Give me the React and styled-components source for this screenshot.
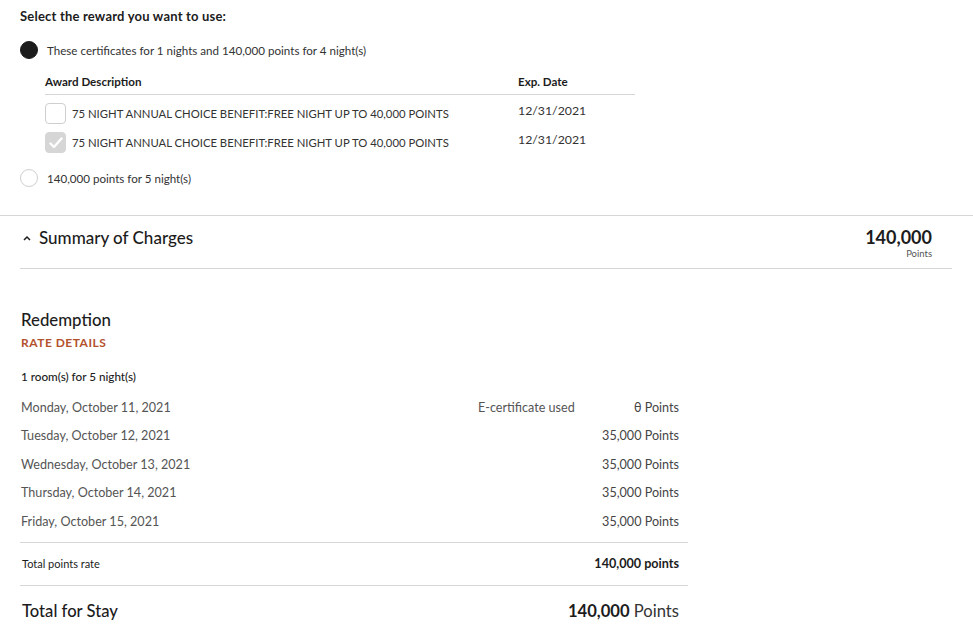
import React from 'react';
import styled, { createGlobalStyle } from 'styled-components';

const GlobalStyle = createGlobalStyle`
  body {
    margin: 0;
    background: #fff;
    font-family: Lato, 'Liberation Sans', sans-serif;
    color: #333;
  }
`;

const Page = styled.div`
  width: 973px;
`;

const RewardSection = styled.section`
  padding: 8px 20px 28px;
  border-bottom: 1px solid #d6d6d6;
`;

const Heading = styled.h3`
  margin: 0;
  font-size: 13px;
  line-height: 16px;
  font-weight: 700;
  letter-spacing: 0.2px;
  color: #1c1c1c;
`;

const RadioRow = styled.label`
  display: flex;
  align-items: center;
  gap: 9px;
  margin-top: ${(p) => p.$top}px;
  font-size: 11.6px;
  color: #333;
`;

const Radio = styled.span`
  width: 18px;
  height: 18px;
  border-radius: 50%;
  box-sizing: border-box;
  background: ${(p) => (p.$checked ? '#1c1c1c' : '#fff')};
  border: 1px solid ${(p) => (p.$checked ? '#1c1c1c' : '#cfcfcf')};
  flex-shrink: 0;
`;

const AwardTable = styled.div`
  margin: 16px 0 0 25px;
  width: 590px;
`;

const AwardHead = styled.div`
  display: grid;
  grid-template-columns: 473px 1fr;
  padding-bottom: 5px;
  border-bottom: 1px solid #d6d6d6;
  font-size: 11.6px;
  line-height: 14px;
  font-weight: 700;
  color: #1c1c1c;
`;

const AwardRow = styled.div`
  display: grid;
  grid-template-columns: 473px 1fr;
  align-items: start;
  margin-top: ${(p) => p.$top}px;
  font-size: 11.3px;
  color: #333;
`;

const AwardName = styled.div`
  display: flex;
  align-items: center;
  gap: 6px;
`;

const AwardDate = styled.div`
  font-size: 12.3px;
  line-height: 16px;
`;

const Checkbox = styled.span`
  width: 21px;
  height: 21px;
  box-sizing: border-box;
  border-radius: 4px;
  border: 1px solid ${(p) => (p.$checked ? '#d6d6d6' : '#cfcfcf')};
  background: ${(p) => (p.$checked ? '#d6d6d6' : '#fff')};
  display: flex;
  align-items: center;
  justify-content: center;
  flex-shrink: 0;
`;

const SummaryHeader = styled.div`
  display: flex;
  justify-content: space-between;
  align-items: flex-start;
  margin: 0 21px 0 20px;
  padding: 10px 20px 8px 3px;
  border-bottom: 1px solid #d6d6d6;
`;

const SummaryTitle = styled.div`
  display: flex;
  align-items: center;
  gap: 8px;
  margin-top: 1px;
  font-size: 17px;
  font-weight: 500;
  color: #1c1c1c;
`;

const SummaryTotal = styled.div`
  text-align: right;
`;

const BigPoints = styled.div`
  font-size: 18px;
  line-height: 22px;
  font-weight: 700;
  color: #1c1c1c;
`;

const SmallLabel = styled.div`
  font-size: 9.5px;
  line-height: 12px;
  color: #555;
  margin-top: 0;
`;

const Redemption = styled.section`
  width: 668px;
  margin: 41px 0 0 20px;
`;

const SectionTitle = styled.h2`
  margin: 0 0 0 1px;
  font-size: 16.8px;
  line-height: 20px;
  font-weight: 500;
  color: #1c1c1c;
`;

const RateLabel = styled.div`
  margin: 6px 0 0 1px;
  font-size: 12px;
  line-height: 14px;
  font-weight: 700;
  letter-spacing: 0.5px;
  color: #b3512d;
`;

const RoomCount = styled.div`
  margin: 19px 0 10px 1px;
  font-size: 11.7px;
  line-height: 14px;
  font-weight: 500;
  color: #1c1c1c;
`;

const NightRow = styled.div`
  display: grid;
  grid-template-columns: 457px 1fr auto;
  align-items: center;
  height: 28.5px;
  padding: 0 9px 0 1px;
  font-size: 12.6px;
  color: #555;
`;

const Note = styled.span`
  color: #555;
`;

const Amount = styled.span`
  text-align: right;
  color: #444;
`;

const TotalRow = styled.div`
  display: flex;
  justify-content: space-between;
  align-items: center;
  height: 42px;
  margin-top: 6px;
  padding: 0 9px 0 2px;
  border-top: 1px solid #d6d6d6;
  border-bottom: 1px solid #d6d6d6;
  font-size: 11px;
  color: #1c1c1c;
`;

const TotalValue = styled.span`
  font-size: 12.6px;
  font-weight: 700;
`;

const StayRow = styled.div`
  display: flex;
  justify-content: space-between;
  align-items: center;
  height: 50px;
  padding: 0 9px 0 2px;
  font-size: 16.6px;
  font-weight: 500;
  color: #1c1c1c;
`;

const StayValue = styled.span`
  font-weight: 400;
  color: #333;

  b {
    font-weight: 700;
    color: #1c1c1c;
  }
`;

const nights = [
  { date: 'Monday, October 11, 2021', note: 'E-certificate used', amount: 'θ Points' },
  { date: 'Tuesday, October 12, 2021', amount: '35,000 Points' },
  { date: 'Wednesday, October 13, 2021', amount: '35,000 Points' },
  { date: 'Thursday, October 14, 2021', amount: '35,000 Points' },
  { date: 'Friday, October 15, 2021', amount: '35,000 Points' },
];

const Check = () => (
  <svg width="14" height="12" viewBox="0 0 14 12">
    <path d="M1.5 6.5 L5 10 L12.5 1.5" fill="none" stroke="#fff" strokeWidth="2.4" strokeLinecap="round" strokeLinejoin="round" />
  </svg>
);

const Chevron = () => (
  <svg width="8" height="6" viewBox="0 0 8 6">
    <path d="M1 5 L4 2 L7 5" fill="none" stroke="#1c1c1c" strokeWidth="1.5" />
  </svg>
);

const App = () => (
  <Page>
    <GlobalStyle />
    <RewardSection>
      <Heading>Select the reward you want to use:</Heading>
      <RadioRow $top={17}>
        <Radio $checked />
        These certificates for 1 nights and 140,000 points for 4 night(s)
      </RadioRow>

      <AwardTable>
        <AwardHead>
          <span>Award Description</span>
          <span>Exp. Date</span>
        </AwardHead>
        <AwardRow $top={8}>
          <AwardName>
            <Checkbox />
            75 NIGHT ANNUAL CHOICE BENEFIT:FREE NIGHT UP TO 40,000 POINTS
          </AwardName>
          <AwardDate>12/31/2021</AwardDate>
        </AwardRow>
        <AwardRow $top={8}>
          <AwardName>
            <Checkbox $checked>
              <Check />
            </Checkbox>
            75 NIGHT ANNUAL CHOICE BENEFIT:FREE NIGHT UP TO 40,000 POINTS
          </AwardName>
          <AwardDate>12/31/2021</AwardDate>
        </AwardRow>
      </AwardTable>

      <RadioRow $top={16}>
        <Radio />
        140,000 points for 5 night(s)
      </RadioRow>
    </RewardSection>

    <SummaryHeader>
      <SummaryTitle>
        <Chevron />
        Summary of Charges
      </SummaryTitle>
      <SummaryTotal>
        <BigPoints>140,000</BigPoints>
        <SmallLabel>Points</SmallLabel>
      </SummaryTotal>
    </SummaryHeader>

    <Redemption>
      <SectionTitle>Redemption</SectionTitle>
      <RateLabel>RATE DETAILS</RateLabel>
      <RoomCount>1 room(s) for 5 night(s)</RoomCount>
      {nights.map((n) => (
        <NightRow key={n.date}>
          <span>{n.date}</span>
          <Note>{n.note}</Note>
          <Amount>{n.amount}</Amount>
        </NightRow>
      ))}
      <TotalRow>
        <span>Total points rate</span>
        <TotalValue>140,000 points</TotalValue>
      </TotalRow>
      <StayRow>
        <span>Total for Stay</span>
        <StayValue>
          <b>140,000</b> Points
        </StayValue>
      </StayRow>
    </Redemption>
  </Page>
);

export default App;
